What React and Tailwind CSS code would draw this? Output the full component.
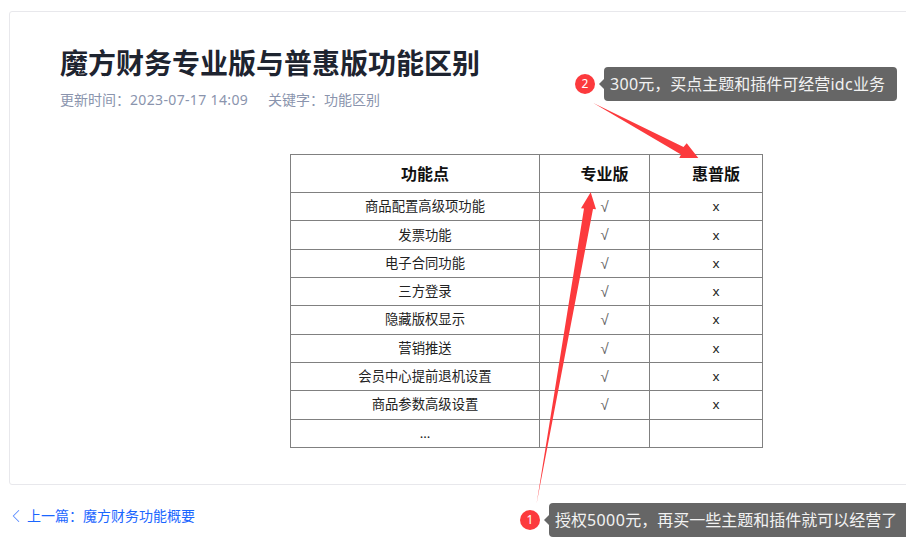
import React from 'react';
import { ChevronLeft } from 'lucide-react';

const rows = [
  '商品配置高级项功能',
  '发票功能',
  '电子合同功能',
  '三方登录',
  '隐藏版权显示',
  '营销推送',
  '会员中心提前退机设置',
  '商品参数高级设置',
];

const Callout = ({ num, children, className }) => (
  <div className={`absolute flex items-center ${className}`}>
    <span className="flex h-5 w-5 items-center justify-center rounded-full bg-[#fc3a3d] text-xs text-white">{num}</span>
    <span className="ml-[4px] h-0 w-0 border-y-[5px] border-r-[5px] border-y-transparent border-r-[#666666]" />
    <span className="flex h-[34px] items-center whitespace-nowrap rounded-sm bg-[#666666] pl-[6px] pr-[12px] text-base text-[#f2f2f2]">
      {children}
    </span>
  </div>
);

const App = () => {
  return (
    <div className="relative h-[544px] w-[906px] overflow-hidden bg-white font-['Noto_Sans','Noto_Sans_CJK_SC',sans-serif] text-[#222222]">
      {/* Article card */}
      <div className="ml-[9px] mt-[11px] h-[474px] w-[1000px] rounded-[3px] border border-[#e8e8ec] pl-[50px] pt-[30px]">
        <h1 className="text-[28px] font-bold leading-[42px] text-[#1e2430]">魔方财务专业版与普惠版功能区别</h1>
        <div className="mt-[6px] flex gap-5 text-sm leading-[20px] text-[#8a94ad]">
          <span>
            更新时间：<span className="tracking-[0.35px]">2023-07-17 14:09</span>
          </span>
          <span>关键字：功能区别</span>
        </div>

        <table className="ml-[230px] mt-[44px] w-[473px] table-fixed border-collapse text-[13.33px]">
          <colgroup>
            <col className="w-[249px]" />
            <col className="w-[110px]" />
            <col className="w-[113px]" />
          </colgroup>
          <thead>
            <tr className="h-[38px] text-base font-bold text-[#111111]">
              <th className="border border-[#808080] pl-5 font-bold">功能点</th>
              <th className="border border-[#808080] pl-5 font-bold">专业版</th>
              <th className="border border-[#808080] pl-5 font-bold">惠普版</th>
            </tr>
          </thead>
          <tbody>
            {rows.map((name) => (
              <tr key={name} className="h-[28.33px]">
                <td className="border border-[#808080] pl-5 pt-px text-center">{name}</td>
                <td className="border border-[#808080] pl-5 text-center font-['Liberation_Sans'] text-[15px] leading-none text-[#666666]">
                  √
                </td>
                <td className="border border-[#808080] pl-5 pt-px text-center">x</td>
              </tr>
            ))}
            <tr className="h-[28.33px]">
              <td className="border border-[#808080] pl-5 pt-px text-center">...</td>
              <td className="border border-[#808080]" />
              <td className="border border-[#808080]" />
            </tr>
          </tbody>
        </table>
      </div>

      {/* Prev article link */}
      <a className="ml-[5px] mt-[20px] flex items-center text-sm leading-[20px] text-[#1a66ff]">
        <ChevronLeft className="h-[22px] w-[22px] text-[#5b8cff]" strokeWidth={1.1} />
        <span>上一篇：魔方财务功能概要</span>
      </a>

      {/* Red annotation arrows */}
      <svg className="pointer-events-none absolute left-0 top-0" width="906" height="544" viewBox="0 0 906 544">
        <polygon
          fill="#fc3a3d"
          points="536.5,504 584,208.5 581,208.3 590.7,192.3 596,209.3 593,209"
        />
        <polygon
          fill="#fc3a3d"
          points="593.3,103 683.5,147 686.7,143.3 698.3,158 679.3,158 681,154.5"
        />
      </svg>

      <Callout num="2" className="left-[575px] top-[67px]">
        <span className="tracking-[0.3px]">300</span>元，买点主题和插件可经营<span className="tracking-[0.3px]">idc</span>业务
      </Callout>
      <Callout num="1" className="left-[520px] top-[503px]">
        授权<span className="tracking-[0.4px]">5000</span>元，再买一些主题和插件就可以经营了
      </Callout>
    </div>
  );
};

export default App;
